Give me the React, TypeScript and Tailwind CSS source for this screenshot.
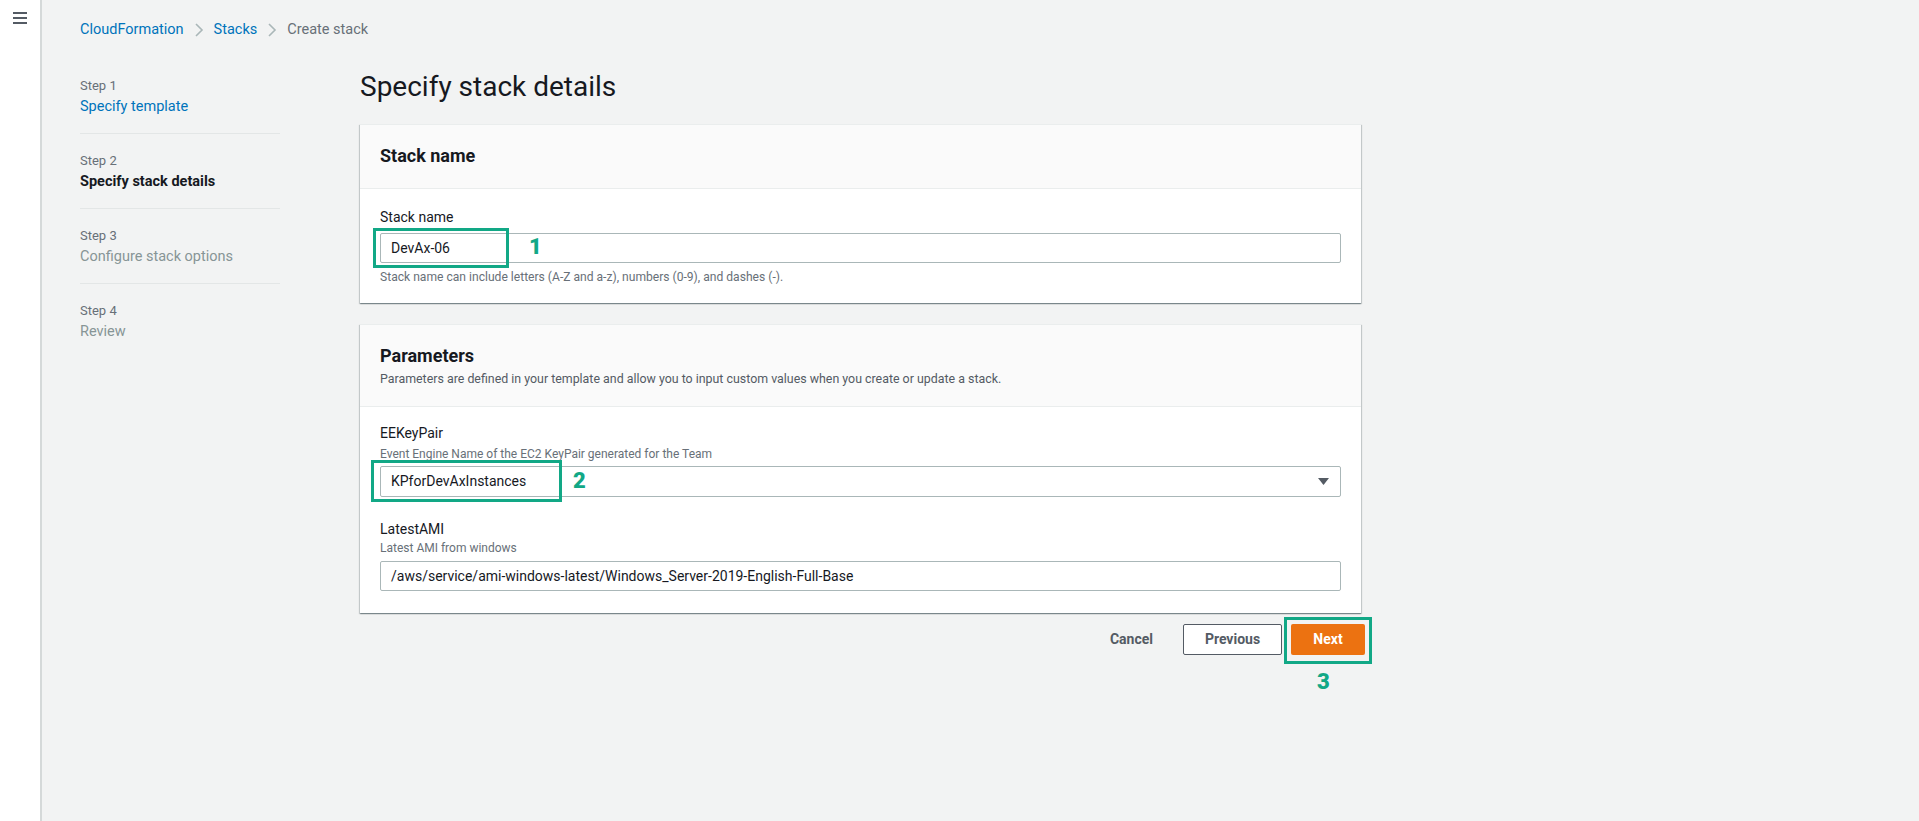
import React from "react";

const Chevron = () => (
  <svg width="10" height="16" viewBox="0 0 10 16" className="mx-[10px]">
    <polyline points="2,2 8,8 2,14" fill="none" stroke="#aab7b8" strokeWidth="1.6" />
  </svg>
);

const Step = ({ n, title, state, first }: { n: number; title: string; state: "done" | "active" | "todo"; first?: boolean }) => (
  <div className={`${first ? "pt-[9px]" : "pt-[18px]"} pb-[15px] ${n < 4 ? "border-b border-[#e3e6e6]" : ""}`}>
    <div className="text-[13px] leading-[18px] text-[#687078]">Step {n}</div>
    <div
      className={`mt-px text-[14.5px] leading-[22px] ${
        state === "done" ? "text-[#0073bb]" : state === "active" ? "text-[#16191f] font-bold" : "text-[#879596]"
      }`}
    >
      {title}
    </div>
  </div>
);

export default function App() {
  return (
    <div className="flex h-[821px] w-full bg-[#f2f3f3] font-['Roboto',sans-serif] text-[#16191f]">
      <div className="w-[42px] shrink-0 bg-white border-r-2 border-[#d5d9d9] pt-[12px] pl-[13px]">
        <svg width="14" height="12" viewBox="0 0 14 12">
          <rect x="0" y="0" width="14" height="2" fill="#545b64" />
          <rect x="0" y="5" width="14" height="2" fill="#545b64" />
          <rect x="0" y="10" width="14" height="2" fill="#545b64" />
        </svg>
      </div>
      <div className="flex-1 pl-[38px]">
        <div className="flex items-center pt-[20px] h-[40px] text-[14.5px] leading-[20px]">
          <span className="text-[#0073bb]">CloudFormation</span>
          <Chevron />
          <span className="text-[#0073bb]">Stacks</span>
          <Chevron />
          <span className="text-[#687078]">Create stack</span>
        </div>
        <div className="flex mt-[28px]">
          <div className="w-[200px] shrink-0">
            <Step n={1} title="Specify template" state="done" first />
            <Step n={2} title="Specify stack details" state="active" />
            <Step n={3} title="Configure stack options" state="todo" />
            <Step n={4} title="Review" state="todo" />
          </div>
          <div className="ml-[80px] w-[1005px]">
            <h1 className="pt-[1px] text-[28px] leading-[36px] font-normal text-[#16191f]">Specify stack details</h1>

            <div className="mt-[19px] w-[1001px] bg-white border-t border-[#eaeded] shadow-[0_1px_1px_0_rgba(0,28,36,0.3),1px_1px_1px_0_rgba(0,28,36,0.15),-1px_1px_1px_0_rgba(0,28,36,0.15)]">
              <div className="bg-[#fafafa] border-b border-[#eaeded] px-5 pt-[19px] pb-[20px]">
                <h2 className="text-[18px] leading-[24px] font-bold">Stack name</h2>
              </div>
              <div className="px-5 pt-[18px] pb-[18px]">
                <div className="text-[14px] leading-[20px]">Stack name</div>
                <div className="relative mt-[6px]">
                  <div className="h-[30px] border border-[#aab7b8] rounded-[2px] flex items-center pl-[10px] text-[14px]">DevAx-06</div>
                  <div className="absolute left-[-7px] top-[-5px] w-[136px] h-[40px] border-[3px] border-[#12a886]"></div>
                  <div className="absolute left-[149px] top-[-1px] text-[22px] leading-[30px] font-black text-[#12a886]">1</div>
                </div>
                <div className="mt-[6px] text-[12.1px] leading-[16px] text-[#687078]">
                  Stack name can include letters (A-Z and a-z), numbers (0-9), and dashes (-).
                </div>
              </div>
            </div>

            <div className="mt-[21px] w-[1001px] bg-white border-t border-[#eaeded] shadow-[0_1px_1px_0_rgba(0,28,36,0.3),1px_1px_1px_0_rgba(0,28,36,0.15),-1px_1px_1px_0_rgba(0,28,36,0.15)]">
              <div className="bg-[#fafafa] border-b border-[#eaeded] px-5 pt-[19px] pb-[18px]">
                <h2 className="text-[18px] leading-[24px] font-bold">Parameters</h2>
                <div className="mt-[2px] text-[12.4px] leading-[18px] text-[#545b64]">
                  Parameters are defined in your template and allow you to input custom values when you create or update a stack.
                </div>
              </div>
              <div className="px-5 pt-[16px] pb-[22px]">
                <div className="text-[14px] leading-[20px]">EEKeyPair</div>
                <div className="mt-[3px] text-[12px] leading-[16px] text-[#687078]">Event Engine Name of the EC2 KeyPair generated for the Team</div>
                <div className="relative mt-[4px]">
                  <div className="h-[31px] border border-[#aab7b8] rounded-[2px] flex items-center justify-between pl-[10px] pr-[11px] text-[14px]">
                    <span>KPforDevAxInstances</span>
                    <svg width="11" height="7" viewBox="0 0 11 7">
                      <polygon points="0,0 11,0 5.5,7" fill="#545b64" />
                    </svg>
                  </div>
                  <div className="absolute left-[-9px] top-[-6px] w-[191px] h-[42px] border-[3px] border-[#12a886]"></div>
                  <div className="absolute left-[193px] top-[0px] text-[22px] leading-[30px] font-black text-[#12a886]">2</div>
                </div>
                <div className="mt-[22px] text-[14px] leading-[20px]">LatestAMI</div>
                <div className="mt-[1px] text-[12px] leading-[16px] text-[#687078]">Latest AMI from windows</div>
                <div className="mt-[5px] h-[30px] border border-[#aab7b8] rounded-[2px] flex items-center pl-[10px] text-[14px]">
                  /aws/service/ami-windows-latest/Windows_Server-2019-English-Full-Base
                </div>
              </div>
            </div>

            <div className="mt-[11px] flex justify-end items-center text-[14px] font-bold">
              <button className="h-[31px] px-[20px] text-[#545b64] mr-[10px]">Cancel</button>
              <button className="h-[31px] w-[99px] border border-[#545b64] rounded-[2px] bg-white text-[#545b64]">Previous</button>
              <div className="relative ml-[9px]">
                <button className="h-[31px] w-[74px] rounded-[2px] bg-[#ec7211] text-white">Next</button>
                <div className="absolute left-[-7px] top-[-7px] w-[88px] h-[47px] border-[3px] border-[#12a886]"></div>
                <div className="absolute left-[26px] top-[43px] text-[22px] leading-[30px] font-black text-[#12a886]">3</div>
              </div>
            </div>
          </div>
        </div>
      </div>
    </div>
  );
}
